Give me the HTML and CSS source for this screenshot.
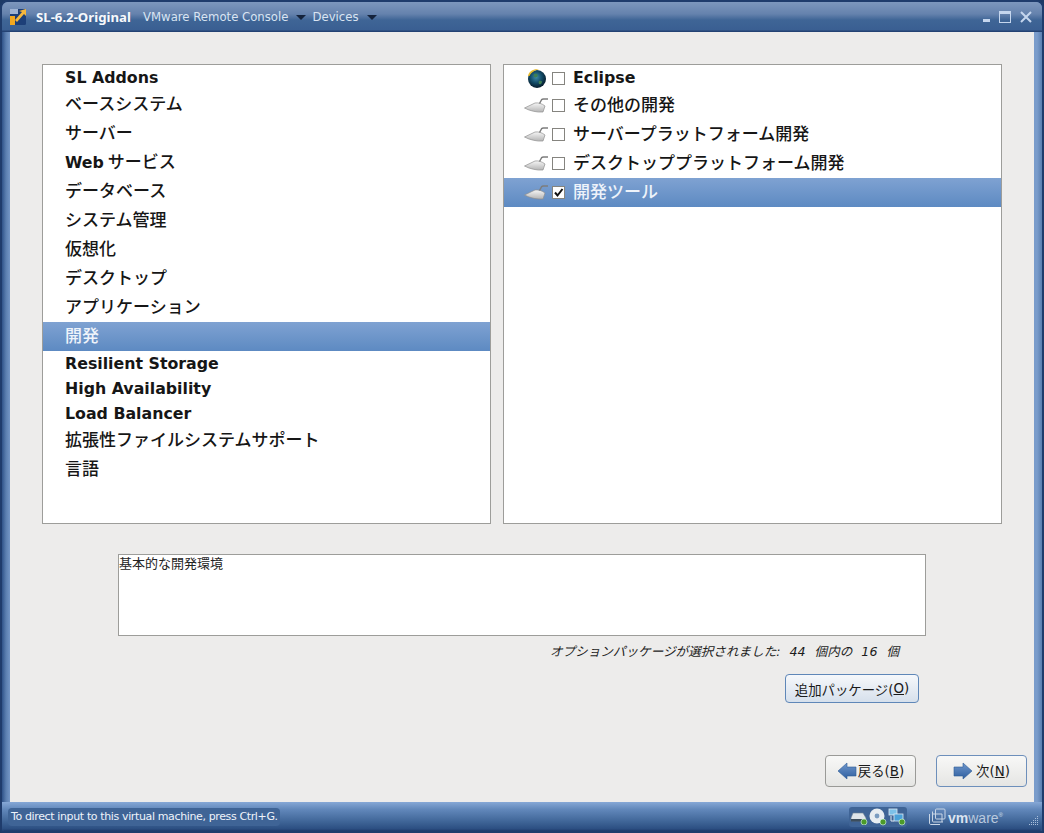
FILE: index.html
```html
<!DOCTYPE html>
<html lang="ja">
<head>
<meta charset="utf-8">
<title>SL-6.2-Original</title>
<link rel="stylesheet" href="styles.css">
</head>
<body>
<svg class="defs" width="0" height="0" aria-hidden="true">
  <defs>
    <linearGradient id="trowelFill" x1="0" y1="0" x2="0" y2="1"><stop offset="0" stop-color="#f6f6f6"/><stop offset="1" stop-color="#b4b4b4"/></linearGradient>
    <radialGradient id="globeFill" cx="0.45" cy="0.4" r="0.65"><stop offset="0" stop-color="#3f8aa8"/><stop offset="0.5" stop-color="#124a66"/><stop offset="1" stop-color="#03121f"/></radialGradient>
    <linearGradient id="arrowFill" x1="0" y1="0" x2="0" y2="1"><stop offset="0" stop-color="#6f97cc"/><stop offset="1" stop-color="#2f5f9f"/></linearGradient>
    <symbol id="trowel" viewBox="0 0 24 16">
      <path d="M0.500 10 L11 5 C14 4.500 18 5.500 21 8 L19 14 C13 14.500 6 13 0.500 10 Z" fill="url(#trowelFill)" stroke="#8f8f8f" stroke-width=".7"/>
      <path d="M15.500 5.500 L17.500 1.800 C18 1.200 18.500 1 19.500 1 L24 1" fill="none" stroke="#7d7d7d" stroke-width="1.400"/>
    </symbol>
  </defs>
</svg>
<div class="window">
  <header class="titlebar">
    <svg class="app-logo" width="16" height="16" viewBox="0 0 16 16"><rect width="16" height="16" rx="1.500" fill="#1d3f78"/><path d="M0 16 L0 7 L5 7 L5 16 Z" fill="#f2a81f"/><path d="M5 11 L12 3 L9 2 L16 0 L16 7 L14 5 L7 13 Z" fill="#f6b73c"/><path d="M0 0 H8 V5 H0 Z" fill="#9fb4d4"/></svg>
    <span class="vm-name">SL-6.2-Original</span>
    <span class="menu-item">VMware Remote Console</span><span class="caret"></span>
    <span class="menu-item">Devices</span><span class="caret"></span>
    <div class="win-controls">
      <span class="ctl-min"></span>
      <span class="ctl-max"></span>
      <svg class="ctl-close" width="12" height="12" viewBox="0 0 12 12"><path d="M1 1 L11 11 M11 1 L1 11" stroke="#c5d6ee" stroke-width="2"/></svg>
    </div>
  </header>
  <main class="client">
    <div class="lists">
      <ul class="list list-left">
        <li class="row latin"><b>SL Addons</b></li>
        <li class="row"><span>ベースシステム</span></li>
        <li class="row"><span>サーバー</span></li>
        <li class="row"><b>Web</b>&nbsp;<span>サービス</span></li>
        <li class="row"><span>データベース</span></li>
        <li class="row"><span>システム管理</span></li>
        <li class="row"><span>仮想化</span></li>
        <li class="row"><span>デスクトップ</span></li>
        <li class="row"><span>アプリケーション</span></li>
        <li class="row selected"><span>開発</span></li>
        <li class="row latin"><b>Resilient Storage</b></li>
        <li class="row latin"><b>High Availability</b></li>
        <li class="row latin"><b>Load Balancer</b></li>
        <li class="row"><span>拡張性ファイルシステムサポート</span></li>
        <li class="row"><span>言語</span></li>
      </ul>
      <ul class="list list-right">
        <li class="row first">
          <svg class="globe" width="21" height="21" viewBox="0 0 21 21"><circle cx="11" cy="11" r="9" fill="url(#globeFill)"/><path d="M2 8 C3 3 8 0.500 13 1.500 C9 2 5 4.500 3.500 8 Z" fill="#e8bb2c"/><path d="M8 6 C11 5 13 7 11 9 C9 10 7 9 8 6 Z M13 13 C16 12 17 14 15 16 C13 17 12 15 13 13 Z" fill="#3e7f52"/></svg>
          <span class="check"></span><b class="eclipse">Eclipse</b>
        </li>
        <li class="row"><svg class="trowel"><use href="#trowel"/></svg><span class="check"></span><span>その他の開発</span></li>
        <li class="row"><svg class="trowel"><use href="#trowel"/></svg><span class="check"></span><span>サーバープラットフォーム開発</span></li>
        <li class="row"><svg class="trowel"><use href="#trowel"/></svg><span class="check"></span><span>デスクトッププラットフォーム開発</span></li>
        <li class="row selected"><svg class="trowel"><use href="#trowel"/></svg><span class="check checked"><svg width="11" height="11" viewBox="0 0 11 11"><path d="M2 5.500 L4.500 8.500 L9.500 2" fill="none" stroke="#111" stroke-width="2"/></svg></span><span>開発ツール</span></li>
      </ul>
    </div>
    <div class="description">基本的な開発環境</div>
    <p class="count">オプションパッケージが選択されました: 44 個内の 16 個</p>
    <div class="add-row"><button class="btn btn-add">追加パッケージ(<u>O</u>)</button></div>
    <div class="nav">
      <button class="btn btn-nav btn-back">
        <svg width="20" height="20" viewBox="0 0 20 20"><path d="M1 10 L10 2 V6 H19 V15 H10 V18 Z" fill="url(#arrowFill)" stroke="#2d5a96" stroke-width=".6"/></svg><span class="btn-label">戻る(<u>B</u>)</span>
      </button>
      <button class="btn btn-nav btn-next">
        <svg width="20" height="20" viewBox="0 0 20 20"><path d="M19 10 L10 2 V6 H1 V15 H10 V18 Z" fill="url(#arrowFill)" stroke="#2d5a96" stroke-width=".6"/></svg><span class="btn-label">次(<u>N</u>)</span>
      </button>
    </div>
  </main>
  <footer class="statusbar">
    <span class="status-msg">To direct input to this virtual machine, press Ctrl+G.</span>
    <div class="devices">
      <svg width="18" height="16" viewBox="0 0 18 16"><path d="M3 4 H13 L16 9 V12 H1 V9 Z" fill="#dfe5ea" stroke="#6d7f92" stroke-width=".6"/><rect x="1" y="10" width="15" height="2.500" fill="#3c4d5c"/><circle cx="14" cy="13" r="3" fill="#4c9a2a" stroke="#dfe" stroke-width=".6"/></svg>
      <svg width="18" height="18" viewBox="0 0 18 18"><circle cx="8" cy="8" r="7.500" fill="#e8edf1"/><circle cx="8" cy="8" r="2.400" fill="#7a9cc0"/><circle cx="14" cy="14" r="3" fill="#4c9a2a" stroke="#dfe" stroke-width=".6"/></svg>
      <svg width="18" height="18" viewBox="0 0 18 18"><rect x="1" y="1" width="8" height="6" fill="#7cc0e8" stroke="#dfe8f2" stroke-width=".8"/><rect x="6" y="6" width="9" height="7" fill="#4aa0d8" stroke="#dfe8f2" stroke-width=".8"/><path d="M3 8 V13 H6" fill="none" stroke="#dfe8f2"/><circle cx="14" cy="14" r="3" fill="#4c9a2a" stroke="#dfe" stroke-width=".6"/></svg>
    </div>
    <div class="vmware-logo">
      <svg width="18" height="18" viewBox="0 0 18 18" fill="none" stroke="#c9d6e6" stroke-width="1"><path d="M1.500 6 V15 C1.500 16 2 16.500 3 16.500 H12"/><path d="M4.500 3.500 V13 C4.500 13.500 5 14 5.500 14 H15"/><rect x="7.500" y="1" width="9.500" height="10" rx="1"/><path d="M4.500 6 H14 V14"/></svg>
      <span class="vmware-text"><b>vm</b><span class="ware">ware</span><sup>®</sup></span>
    </div>
    <svg class="grip" width="12" height="12" viewBox="0 0 12 12" fill="#a9bfdc"><rect x="10" y="1" width="1" height="1"/><rect x="8" y="3" width="1" height="1"/><rect x="10" y="3" width="1" height="1"/><rect x="6" y="5" width="1" height="1"/><rect x="8" y="5" width="1" height="1"/><rect x="10" y="5" width="1" height="1"/><rect x="4" y="7" width="1" height="1"/><rect x="6" y="7" width="1" height="1"/><rect x="8" y="7" width="1" height="1"/><rect x="10" y="7" width="1" height="1"/><rect x="2" y="9" width="1" height="1"/><rect x="4" y="9" width="1" height="1"/><rect x="6" y="9" width="1" height="1"/><rect x="8" y="9" width="1" height="1"/><rect x="10" y="9" width="1" height="1"/></svg>
  </footer>
</div>
</body>
</html>
```
FILE: styles.css
```css
* { box-sizing: border-box; }
html, body { margin: 0; padding: 0; }
body { width: 1044px; height: 833px; overflow: hidden; background: #1d3a66; font-family: "DejaVu Sans", "Noto Sans CJK JP", sans-serif; }
.defs { display: block; height: 0; }
.window {
  width: 1044px; height: 833px; display: flex; flex-direction: column;
  background: linear-gradient(90deg, #2f5389 0, #5b7fb0 4px, #7a9ccb 9px, #7a9ccb 1035px, #5b7fb0 1040px, #2f5389 100%);
  border: 2px solid #1f3c6c; border-radius: 8px 8px 4px 4px; overflow: hidden;
}
.titlebar {
  height: 30px; flex: none; display: flex; align-items: center; padding-left: 8px;
  background: linear-gradient(180deg, #7d97bd 0, #6582ad 40%, #3f6596 60%, #3a5f92 92%, #1d3a6b 100%);
  color: #e6edf6; font-family: "DejaVu Sans", sans-serif;
}
.app-logo { flex: none; margin-right: 10px; }
.vm-name { font-family: "Noto Sans", sans-serif; font-weight: bold; font-size: 13.200px; color: #f7f9fc; width: 107px; white-space: nowrap; }
.menu-item { font-size: 11.700px; color: #d9e4f2; }
.caret { width: 0; height: 0; border: 5px solid transparent; border-top: 5px solid #14233c; border-bottom: 0; margin: 0 6px 0 8px; }
.win-controls { margin-left: auto; display: flex; align-items: center; gap: 9px; padding-right: 10px; }
.ctl-min { width: 7px; height: 3px; background: #c5d6ee; margin-top: 7px; }
.ctl-max { width: 12px; height: 12px; border: 1px solid #c5d6ee; border-top-width: 3px; }
.client { flex: 1; margin: 0 8px; background: #edeceb; padding: 32px 0 0 32px; }
.lists { display: flex; gap: 12px; height: 460px; }
.list { list-style: none; margin: 0; padding: 0; background: #fff; border: 1px solid #9d9d9a; height: 460px; }
.list-left { width: 449px; }
.list-right { width: 499px; }
.row { height: 29px; display: flex; align-items: center; padding-left: 22px; font-size: 17px; font-weight: 500; color: #161616; white-space: pre; font-family: "Noto Sans CJK JP", sans-serif; }
.row > span:not(.check) { margin-bottom: 5px; }
.row b { font-family: "DejaVu Sans", sans-serif; font-weight: bold; font-size: 15.800px; }
.row b.eclipse { margin-bottom: 2px; }
.row.latin { height: 25px; }
.list-right .row { padding-left: 20px; }
.list-right .row.first { height: 26px; }
.selected { background: linear-gradient(180deg, #7fa2d2 0, #5d8ac2 100%); color: #eef3fa; }
.trowel { width: 24px; height: 16px; flex: none; }
.globe { flex: none; margin-left: 2px; margin-right: 1px; }
.check { width: 13px; height: 13px; flex: none; margin: 0 8px 0 4px; background: #fff; border: 1px solid #85847f; display: flex; align-items: center; justify-content: center; }
.description { width: 808px; height: 82px; margin: 30px 0 0 76px; background: #fff; border: 1px solid #9d9d9a; font-size: 13px; line-height: 18px; color: #222; }
.count { margin: 6px 0 0 0; width: 857px; text-align: right; font-size: 12.600px; line-height: 20px; font-style: italic; color: #1c1c1c; word-spacing: 5px; white-space: nowrap; }
.add-row { display: flex; justify-content: flex-end; width: 877px; margin-top: 12px; }
.btn { font-family: inherit; font-size: 13.400px; color: #1a1a1a; display: flex; align-items: center; justify-content: center; padding: 0; background: linear-gradient(180deg, #f8f8f7 0, #e5e5e3 100%); border-radius: 4px; }
.btn u { text-decoration: underline; }
.btn-add { width: 134px; height: 29px; border: 1px solid #5f87b8; background: linear-gradient(180deg, #f6f8fb 0, #d6e0ec 100%); }
.nav { display: flex; justify-content: flex-end; gap: 20px; margin-top: 52px; padding-right: 7px; }
.btn-nav { width: 91px; height: 32px; border: 1px solid #9a9a97; }
.btn-label { margin-bottom: 3px; }
.btn-next { border-color: #6d8fbb; }
.btn-back svg { margin-right: 1px; }
.btn-next svg { margin-right: 3px; }
.statusbar {
  height: 29px; flex: none; display: flex; align-items: center; padding: 0 3px 0 6px;
  background: linear-gradient(180deg, #86a8d6 0, #6288bb 25%, #3d6395 70%, #2c4f82 92%, #1d3a6b 100%);
  color: #eef3fa;
}
.status-msg { width: 272px; height: 18px; background: #3f6496; border-radius: 4px; padding-left: 3px; font: 11px/18px "DejaVu Sans", sans-serif; letter-spacing: -.37px; white-space: nowrap; flex: none; }
.devices { margin-left: 569px; width: 58px; height: 20px; background: #3f6496; border-radius: 3px; display: flex; align-items: center; justify-content: space-between; padding: 0 1px; flex: none; }
.vmware-logo { margin-left: 21px; display: flex; align-items: center; gap: 2px; width: 76px; color: #dbe4f0; flex: none; }
.vmware-text { font: 14px/18px "Liberation Sans", sans-serif; }
.vmware-text .ware { color: #b9c9de; }
.vmware-text sup { font-size: 6px; }
.grip { margin-left: auto; align-self: flex-end; margin-bottom: 4px; flex: none; }
```
